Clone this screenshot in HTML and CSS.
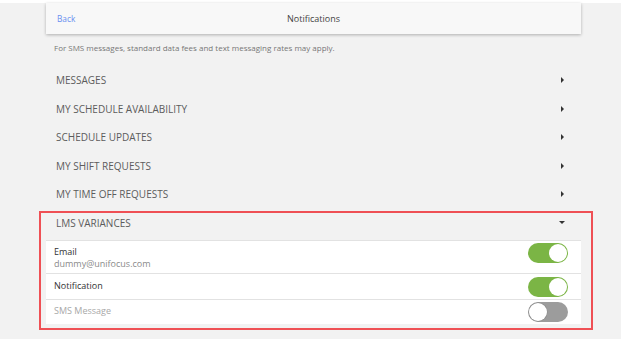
FILE: index.html
```html
<!DOCTYPE html>
<html>
<head>
<meta charset="utf-8">
<link rel="stylesheet" href="styles.css">
</head>
<body>
<div class="topstrip"></div>
<div class="page">
  <header class="navbar">
    <a class="back">Back</a>
    <div class="title">Notifications</div>
    <span class="spacer"></span>
  </header>
  <p class="disclaimer">For SMS messages, standard data fees and text messaging rates may apply.</p>
  <ul class="cats">
    <li class="cat"><span>MESSAGES</span><i class="arrow-right"></i></li>
    <li class="cat"><span>MY SCHEDULE AVAILABILITY</span><i class="arrow-right"></i></li>
    <li class="cat"><span>SCHEDULE UPDATES</span><i class="arrow-right"></i></li>
    <li class="cat"><span>MY SHIFT REQUESTS</span><i class="arrow-right"></i></li>
    <li class="cat"><span>MY TIME OFF REQUESTS</span><i class="arrow-right"></i></li>
  </ul>
  <section class="highlight">
    <div class="cat-open"><span>LMS VARIANCES</span><i class="arrow-down"></i></div>
    <div class="panel">
      <div class="prow prow-email">
        <div class="ptext">
          <div class="plabel">Email</div>
          <div class="psub">dummy@unifocus.com</div>
        </div>
        <div class="toggle on"><span class="knob"></span></div>
      </div>
      <div class="prow prow-notif">
        <div class="plabel single">Notification</div>
        <div class="toggle on"><span class="knob"></span></div>
      </div>
      <div class="prow prow-sms">
        <div class="plabel single disabled">SMS Message</div>
        <div class="toggle off"><span class="knob"></span></div>
      </div>
    </div>
  </section>
</div>
</body>
</html>
```
FILE: styles.css
```css
* { box-sizing: border-box; }
html, body { margin: 0; padding: 0; }
body {
  background: #f2f2f2;
  font-family: "Open Sans", "Liberation Sans", sans-serif;
  color: #555;
}
.topstrip { height: 3px; background: #ffffff; }
.page { width: 535px; margin-left: 46px; }

.navbar {
  height: 31px;
  background: #f8f8f8;
  box-shadow: 0 1px 3px rgba(0,0,0,0.28);
  display: flex;
  align-items: center;
  padding: 0 11px;
  position: relative;
}
.back { color: #6a8ff0; font-size: 8.3px; width: 60px; }
.title { flex: 1; text-align: center; font-size: 9px; color: #444; }
.spacer { width: 60px; }

.disclaimer {
  margin: 8px 0 12px 8px;
  font-size: 8px;
  line-height: 12px;
  color: #777;
}

.cats { list-style: none; margin: 0; padding: 0; }
.cat, .cat-open {
  display: flex;
  justify-content: space-between;
  align-items: center;
  padding: 0 17px 0 10px;
  font-size: 10px;
  color: #5c5c5c;
}
.cat { height: 28.5px; }
.arrow-right {
  width: 0; height: 0;
  border-left: 3.5px solid #333;
  border-top: 3px solid transparent;
  border-bottom: 3px solid transparent;
}
.arrow-down {
  width: 0; height: 0;
  border-top: 3.5px solid #333;
  border-left: 3px solid transparent;
  border-right: 3px solid transparent;
  margin-right: -1px;
}

.highlight {
  margin: 2.5px -12px 0 -7px;
  border: 2px solid #ef5055;
  padding: 0 10px 4px 5px;
}
.cat-open { height: 27px; padding-bottom: 8px; }

.panel { background: #fff; }
.prow {
  display: flex;
  justify-content: space-between;
  align-items: flex-start;
  border-top: 1px solid #e2e2e2;
  padding: 0 13px 0 8px;
  font-size: 9px;
}
.prow-email { height: 33px; }
.prow-email .ptext { padding-top: 5px; }
.prow-email .toggle { margin-top: 2px; }
.prow-notif { height: 26px; }
.prow-notif .plabel { line-height: 24px; }
.prow-notif .toggle { margin-top: 3px; }
.prow-sms { height: 25px; }
.prow-sms .plabel { line-height: 22px; }
.prow-sms .toggle { margin-top: 2px; }

.plabel { color: #333; line-height: 12px; }
.psub { color: #8a8a8a; line-height: 12px; }
.plabel.disabled { color: #a8a8a8; }

.toggle {
  width: 40px;
  height: 20px;
  border-radius: 10px;
  padding: 1px;
  display: flex;
}
.toggle.on { background: #7bb545; justify-content: flex-end; }
.toggle.off { background: #9c9c9c; justify-content: flex-start; }
.knob {
  width: 18px;
  height: 18px;
  border-radius: 50%;
  background: #fff;
}
.toggle.off .knob { box-shadow: 0 0 0 0.5px #888; }
```
